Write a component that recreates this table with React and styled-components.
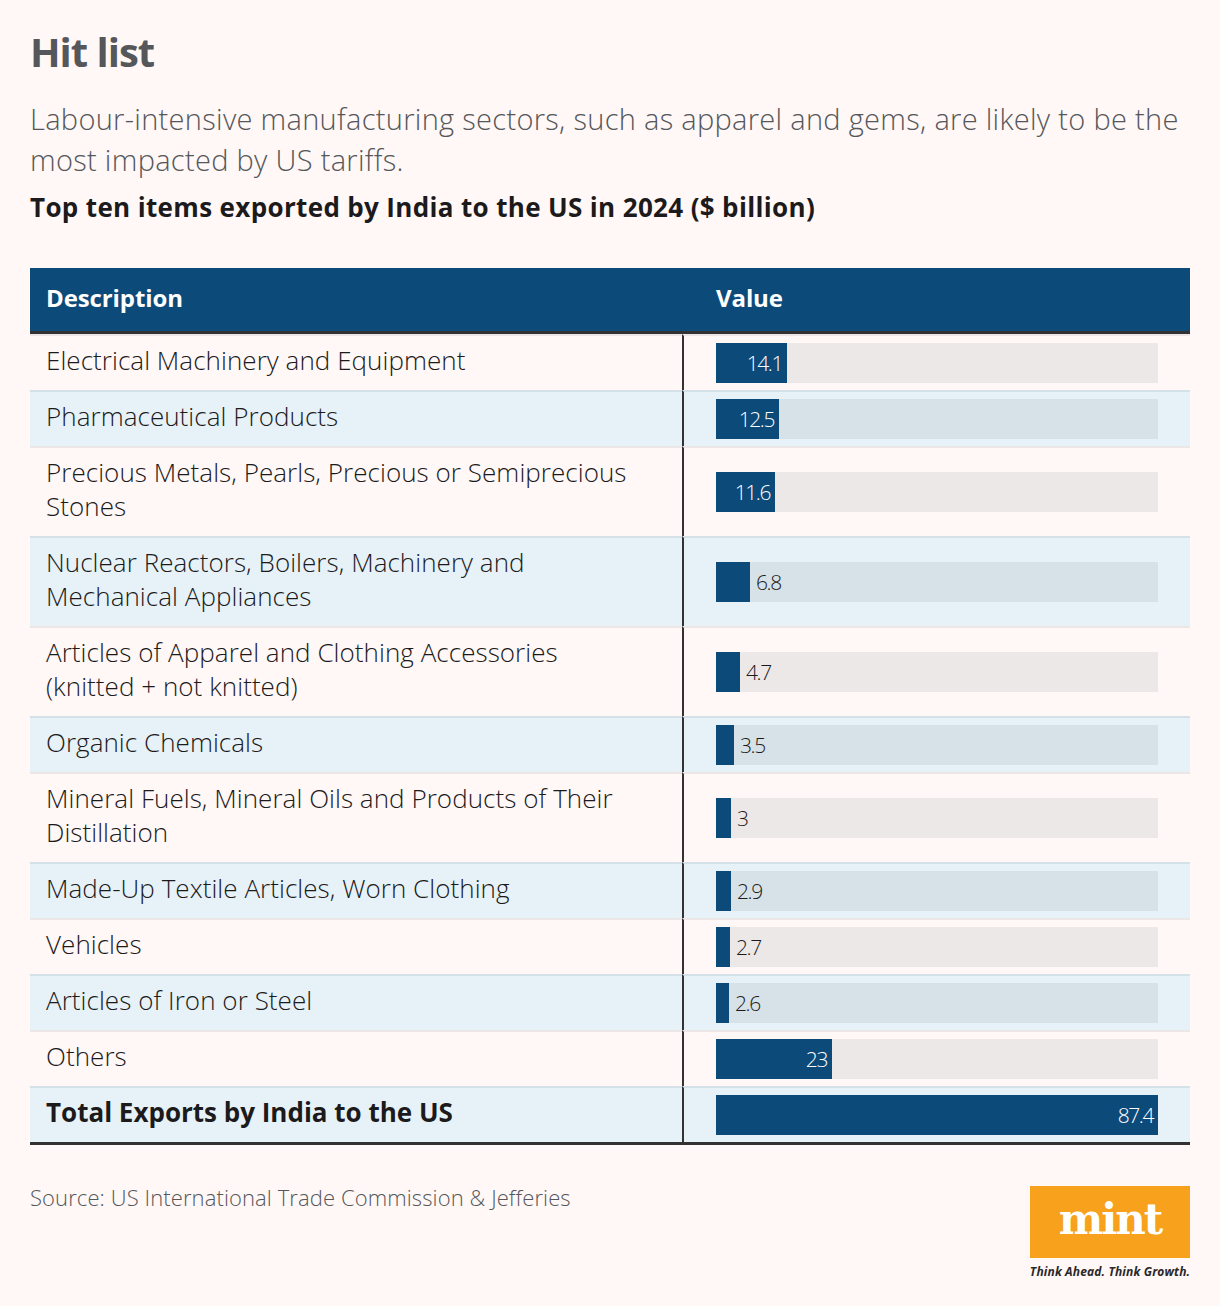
import React from "react";
import styled, { createGlobalStyle } from "styled-components";

const ROWS = [
  { label: "Electrical Machinery and Equipment", value: 14.1 },
  { label: "Pharmaceutical Products", value: 12.5 },
  { label: "Precious Metals, Pearls, Precious or Semiprecious Stones", value: 11.6 },
  { label: "Nuclear Reactors, Boilers, Machinery and Mechanical Appliances", value: 6.8 },
  { label: "Articles of Apparel and Clothing Accessories (knitted + not knitted)", value: 4.7 },
  { label: "Organic Chemicals", value: 3.5 },
  { label: "Mineral Fuels, Mineral Oils and Products of Their Distillation", value: 3 },
  { label: "Made-Up Textile Articles, Worn Clothing", value: 2.9 },
  { label: "Vehicles", value: 2.7 },
  { label: "Articles of Iron or Steel", value: 2.6 },
  { label: "Others", value: 23 },
  { label: "Total Exports by India to the US", value: 87.4, total: true },
];

const MAX = 87.4;
const TRACK = 442;

const GlobalStyle = createGlobalStyle`
  body {
    margin: 0;
    background: #fff8f7;
    font-family: "Open Sans", "Noto Sans", sans-serif;
  }
`;

const Page = styled.div`
  width: 1160px;
  padding: 26px 30px 0;
  height: 1280px;
`;

const Title = styled.h1`
  margin: 0;
  font-size: 40px;
  line-height: 52px;
  font-weight: 700;
  letter-spacing: -1px;
  color: #55575a;
`;

const Subtitle = styled.p`
  margin: 20px 0 0;
  font-size: 29px;
  line-height: 41px;
  font-weight: 300;
  letter-spacing: 0.3px;
  color: #55575a;
`;

const ChartTitle = styled.h2`
  margin: 9px 0 0;
  font-size: 26px;
  line-height: 36px;
  font-weight: 700;
  letter-spacing: 0.35px;
  color: #1c1a1b;
`;

const Table = styled.div`
  margin-top: 43px;
  display: grid;
  grid-template-columns: 652px 1fr;
  border-bottom: 3px solid #333132;
`;

const HeadCell = styled.div`
  height: 66px;
  box-sizing: border-box;
  display: flex;
  align-items: center;
  padding-left: ${(p) => p.$pad}px;
  padding-bottom: 5px;
  background: #0c4a7a;
  color: #fff;
  font-size: 24px;
  font-weight: 700;
  letter-spacing: -0.1px;
  border-bottom: 3px solid #333132;
`;

const DescCell = styled.div`
  padding: 7px 40px 13px 16px;
  font-size: 26px;
  line-height: 34px;
  font-weight: ${(p) => (p.$total ? 700 : 300)};
  letter-spacing: ${(p) => (p.$total ? "0" : "0.05px")};
  color: #1c1a1b;
  background: ${(p) => (p.$alt ? "#e6f2f8" : "#fff8f7")};
  border-top: 2px solid ${(p) => (p.$alt ? "#d4e1e8" : "#ede6e6")};
`;

const ValueCell = styled.div`
  display: flex;
  align-items: center;
  padding: 0 32px;
  background: ${(p) => (p.$alt ? "#e6f2f8" : "#fff8f7")};
  border-top: 2px solid ${(p) => (p.$alt ? "#d4e1e8" : "#ede6e6")};
  border-left: 2px solid #333132;
`;

const Track = styled.div`
  width: ${TRACK}px;
  height: 40px;
  display: flex;
  align-items: center;
  background: ${(p) => (p.$alt ? "#d6e2e8" : "#ede8e8")};
`;

const Bar = styled.div`
  height: 40px;
  flex: none;
  display: flex;
  align-items: center;
  justify-content: flex-end;
  background: #0c4a7a;
`;

const BarLabel = styled.span`
  font-size: 21px;
  font-weight: 300;
  letter-spacing: -1.4px;
  color: ${(p) => (p.$inside ? "#fff" : "#1c1a1b")};
  padding: ${(p) => (p.$inside ? "0 5px 0 0" : "0 0 0 6px")};
`;

const Footer = styled.div`
  margin-top: 41px;
  display: flex;
  justify-content: space-between;
  align-items: flex-start;
`;

const Source = styled.div`
  font-size: 22px;
  line-height: 22px;
  font-weight: 300;
  letter-spacing: 0.1px;
  color: #55575a;
`;

const Logo = styled.div`
  width: 160px;
  display: flex;
  flex-direction: column;
  align-items: center;
`;

const LogoBox = styled.div`
  width: 160px;
  height: 72px;
  background: #f8a11d;
  display: flex;
  align-items: center;
  justify-content: center;
  color: #fff;
  font-family: "DejaVu Serif", serif;
  font-weight: 700;
  font-size: 42px;
  letter-spacing: -2px;
  padding-bottom: 6px;
  box-sizing: border-box;
`;

const Tagline = styled.div`
  margin-top: 5px;
  font-family: "Open Sans", sans-serif;
  font-style: italic;
  font-weight: 700;
  font-size: 12px;
  letter-spacing: 0.15px;
  color: #2a2829;
  white-space: nowrap;
`;

const Row = ({ row, alt }) => {
  const width = Math.round((row.value / MAX) * TRACK);
  const inside = width >= 50;
  return (
    <>
      <DescCell $alt={alt} $total={row.total}>{row.label}</DescCell>
      <ValueCell $alt={alt}>
        <Track $alt={alt}>
          <Bar style={{ width }}>
            {inside && <BarLabel $inside>{row.value}</BarLabel>}
          </Bar>
          {!inside && <BarLabel>{row.value}</BarLabel>}
        </Track>
      </ValueCell>
    </>
  );
};

const App = () => (
  <Page>
    <GlobalStyle />
    <Title>Hit list</Title>
    <Subtitle>
      Labour-intensive manufacturing sectors, such as apparel and gems, are likely to be the
      <br />
      most impacted by US tariffs.
    </Subtitle>
    <ChartTitle>Top ten items exported by India to the US in 2024 ($ billion)</ChartTitle>
    <Table>
      <HeadCell $pad={16}>Description</HeadCell>
      <HeadCell $pad={34}>Value</HeadCell>
      {ROWS.map((row, i) => (
        <Row key={row.label} row={row} alt={i % 2 === 1} />
      ))}
    </Table>
    <Footer>
      <Source>Source: US International Trade Commission &amp; Jefferies</Source>
      <Logo>
        <LogoBox>mint</LogoBox>
        <Tagline>Think Ahead. Think Growth.</Tagline>
      </Logo>
    </Footer>
  </Page>
);

export default App;
